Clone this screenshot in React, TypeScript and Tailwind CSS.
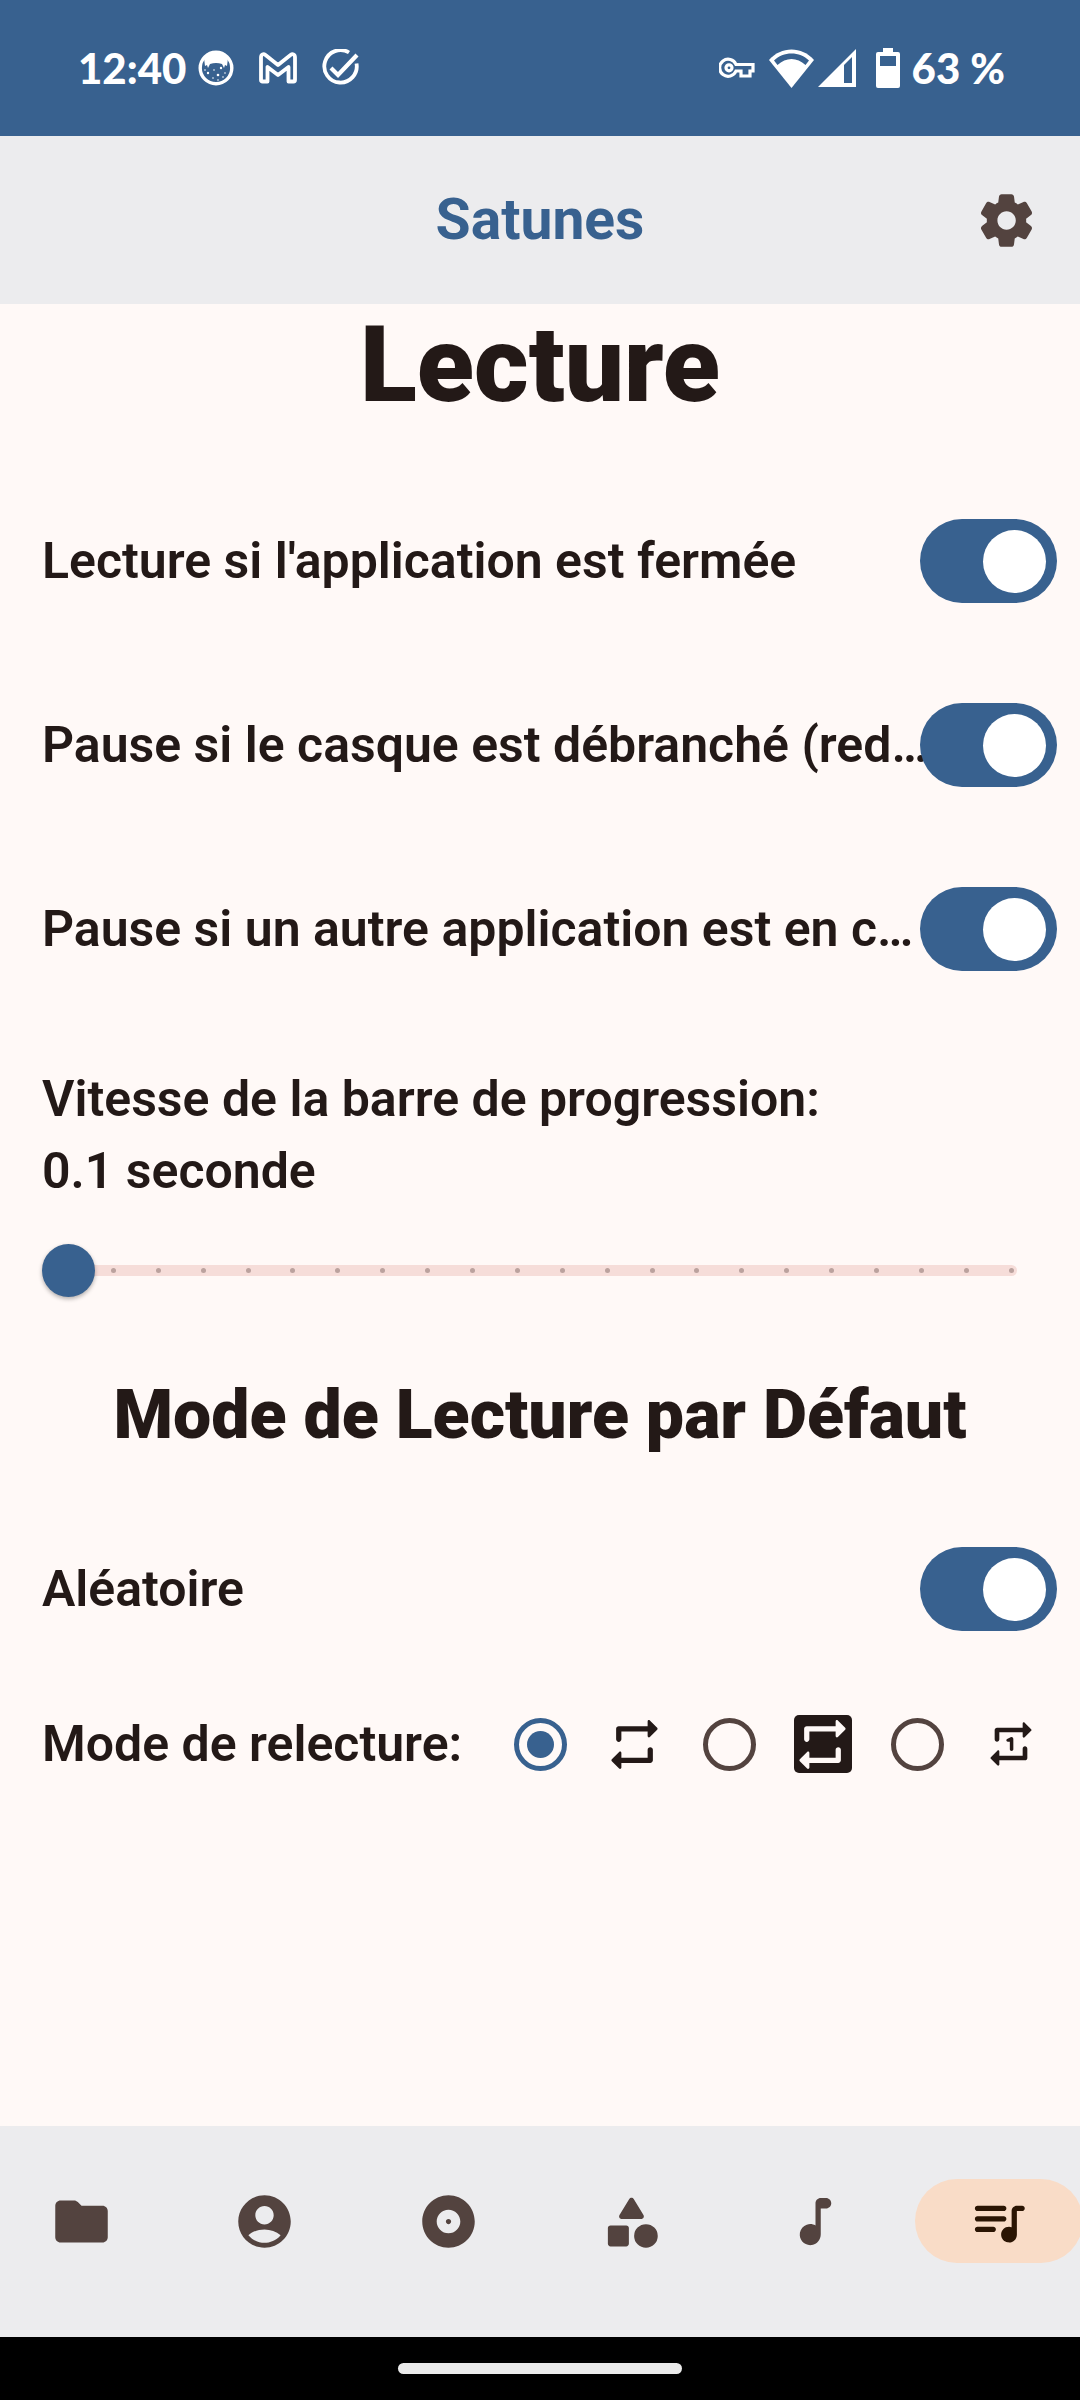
import { useState, type ReactNode } from "react";

const folder =
  "M10.59 4.59C10.21 4.21 9.7 4 9.17 4H4c-1.1 0-1.99.9-1.99 2L2 18c0 1.1.9 2 2 2h16c1.1 0 2-.9 2-2V8c0-1.1-.9-2-2-2h-8l-1.41-1.41z";
const account =
  "M12 2C6.48 2 2 6.48 2 12s4.48 10 10 10 10-4.48 10-10S17.52 2 12 2zm0 4.1c1.93 0 3.5 1.57 3.5 3.5s-1.57 3.5-3.5 3.5-3.5-1.57-3.5-3.5 1.57-3.5 3.5-3.5zm0 14c-2.03 0-4.43-.82-6.14-2.88C7.55 15.8 9.68 15 12 15s4.45.8 6.14 2.22C16.43 19.28 14.03 20.1 12 20.1z";
const album =
  "M12 2C6.48 2 2 6.48 2 12s4.48 10 10 10 10-4.48 10-10S17.52 2 12 2zm0 14.5c-2.49 0-4.5-2.01-4.5-4.5S9.51 7.5 12 7.5s4.5 2.01 4.5 4.5-2.01 4.5-4.5 4.5zm0-5.5c-.55 0-1 .45-1 1s.45 1 1 1 1-.45 1-1-.45-1-1-1z";
const category =
  "M11.15 3.4 7.43 9.48c-.41.66.07 1.52.85 1.52h7.43c.78 0 1.26-.86.85-1.52L12.85 3.4c-.39-.64-1.31-.64-1.7 0zM17.5 13a4.5 4.5 0 1 0 0 9 4.5 4.5 0 0 0 0-9zM4 21.5h6c.55 0 1-.45 1-1v-6c0-.55-.45-1-1-1H4c-.55 0-1 .45-1 1v6c0 .55.45 1 1 1z";
const note =
  "M12 5v8.55c-.94-.54-2.1-.75-3.33-.32-1.34.48-2.37 1.67-2.61 3.07-.46 2.74 1.86 5.08 4.59 4.65 1.96-.31 3.35-2.11 3.35-4.1V7h2c1.1 0 2-.9 2-2s-.9-2-2-2h-2c-1.1 0-2 .9-2 2z";
const queue =
  "M14 6H4c-.55 0-1 .45-1 1s.45 1 1 1h10c.55 0 1-.45 1-1s-.45-1-1-1zm0 4H4c-.55 0-1 .45-1 1s.45 1 1 1h10c.55 0 1-.45 1-1s-.45-1-1-1zM4 16h6c.55 0 1-.45 1-1s-.45-1-1-1H4c-.55 0-1 .45-1 1s.45 1 1 1zM19 6c-1.1 0-2 .9-2 2v6.18c-.31-.11-.65-.18-1-.18-1.84 0-3.28 1.64-2.95 3.54.21 1.21 1.2 2.2 2.41 2.41 1.9.33 3.54-1.11 3.54-2.95V8h2c.55 0 1-.45 1-1s-.45-1-1-1h-2z";
const gear =
  "M19.5 12c0-.23-.01-.45-.03-.68l1.86-1.41c.4-.3.51-.86.26-1.3l-1.87-3.23c-.25-.44-.79-.62-1.25-.42l-2.15.91c-.37-.26-.76-.49-1.17-.68l-.29-2.31C14.8 2.38 14.37 2 13.87 2h-3.73c-.51 0-.94.38-1 .88l-.29 2.31c-.41.19-.8.42-1.17.68l-2.15-.91c-.46-.2-1-.02-1.25.42L2.41 8.62c-.25.44-.14.99.26 1.3l1.86 1.41c-.02.22-.03.44-.03.67s.01.45.03.68l-1.86 1.41c-.4.3-.51.86-.26 1.3l1.87 3.23c.25.44.79.62 1.25.42l2.15-.91c.37.26.76.49 1.17.68l.29 2.31c.06.5.49.88.99.88h3.73c.5 0 .93-.38.99-.88l.29-2.31c.41-.19.8-.42 1.17-.68l2.15.91c.46.2 1 .02 1.25-.42l1.87-3.23c.25-.44.14-.99-.26-1.3l-1.86-1.41c.03-.23.04-.45.04-.68zm-7.46 3.5c-1.93 0-3.5-1.57-3.5-3.5s1.57-3.5 3.5-3.5 3.5 1.57 3.5 3.5-1.57 3.5-3.5 3.5z";
const repeatArrows =
  "M7 7h10v1.79c0 .45.54.67.85.35l2.79-2.79c.2-.2.2-.51 0-.71l-2.79-2.79c-.31-.31-.85-.09-.85.36V5H6c-.55 0-1 .45-1 1v4c0 .55.45 1 1 1s1-.45 1-1V7zm10 10H7v-1.79c0-.45-.54-.67-.85-.35l-2.79 2.79c-.2.2-.2.51 0 .71l2.79 2.79c.31.31.85.09.85-.36V19h11c.55 0 1-.45 1-1v-4c0-.55-.45-1-1-1s-1 .45-1 1v3z";
const oneMark =
  "M13 14.25V9.81c0-.45-.36-.81-.81-.81-.13 0-.25.03-.36.09l-1.49.74c-.21.1-.34.32-.34.55 0 .34.28.62.62.62h.88v3.25c0 .41.34.75.75.75s.75-.34.75-.75z";

function Icon({ d, className = "size-[63px]" }: { d: string; className?: string }) {
  return (
    <svg viewBox="0 0 24 24" className={className} fill="currentColor" aria-hidden="true">
      <path d={d} />
    </svg>
  );
}

function StatusBar() {
  return (
    <div className="flex h-[136px] items-center justify-between bg-[#38618f] pr-[75px] pl-[78px] text-white">
      <div className="flex items-center">
        <span className="w-[120px] font-[Lato] text-[42px] leading-[56px] font-black">12:40</span>
        <svg viewBox="0 0 36 36" className="size-9" aria-hidden="true">
          <circle cx="18" cy="18" r="15.8" fill="none" stroke="white" strokeWidth="3.4" />
          <path d="M6 8 11 3q7-3 14 0l5 5-1 8-2-1-1 3-2-4q-6-2-12 0l-2 4-1-3-2 1z" fill="white" />
          <g fill="white">
            <circle cx="10" cy="23" r="1.2" />
            <circle cx="16" cy="20" r=".8" />
            <circle cx="23" cy="18" r="1.2" />
            <circle cx="20" cy="25" r="1.3" />
            <circle cx="27" cy="23" r=".8" />
            <circle cx="7" cy="20" r=".8" />
            <circle cx="15" cy="28" r=".8" />
            <circle cx="25" cy="27" r=".8" />
            <circle cx="20" cy="30" r=".8" />
          </g>
        </svg>
        <svg viewBox="0 0 40 32" className="ml-6 h-8 w-10" fill="none" stroke="white" strokeWidth="3.8" strokeLinejoin="round" aria-hidden="true">
          <path d="M3 5.5C3 2 5.500 1.500 7.500 3L20 13 32.500 3C34.500 1.500 37 2 37 5.500V28q0 1.500-1.500 1.500H30.500V15L20 23 9.500 15V29.500H4.500q-1.500 0-1.500-1.500z" />
        </svg>
        <svg viewBox="0 0 38 38" className="ml-6 size-[38px]" fill="none" stroke="white" strokeWidth="3.8" aria-hidden="true">
          <path d="M27 3.5A16.200 16.200 0 1 0 34.500 14.500" />
          <path d="m9 19 7 7L35 6" strokeWidth="4.2" />
        </svg>
      </div>
      <div className="flex items-center">
        <svg viewBox="0 0 36 22" className="h-[22px] w-9" fill="none" stroke="white" strokeWidth="3.2" aria-hidden="true">
          <path d="M17 7.500A8.500 8.500 0 1 0 17 14h5v5h9v-5h3V7.500z" />
          <circle cx="10" cy="10.8" r="3" />
        </svg>
        <svg viewBox="0 0 45 39" className="ml-3.5 h-[39px] w-[45px]" aria-hidden="true">
          <path d="M22.500 39 0 11C12-3 33-3 45 11z" fill="white" />
          <path d="M5 11.500C14 2 31 2 40 11.500L36.500 16C28 8 17 8 8.500 16z" fill="#38618f" />
        </svg>
        <svg viewBox="0 0 38 38" className="ml-1 size-[38px]" aria-hidden="true">
          <path d="M0 38 38 0v38zM26 16v18h8V8z" fill="white" fillRule="evenodd" />
        </svg>
        <svg viewBox="0 0 24 40" className="ml-5 h-10 w-6" aria-hidden="true">
          <path d="M7 0h10v4h5q2 0 2 2v32q0 2-2 2H2q-2 0-2-2V6q0-2 2-2h5zM4 8v10h16V8z" fill="white" fillRule="evenodd" />
        </svg>
        <span className="ml-3 font-[Lato] text-[42px] leading-[56px] font-black">63 %</span>
      </div>
    </div>
  );
}

function SwitchRow({ label }: { label: string }) {
  const [on, setOn] = useState(true);
  return (
    <label className="flex h-[184px] items-center justify-between pr-[23px] pl-[42px]">
      <span className="w-0 flex-1 whitespace-nowrap">{label}</span>
      <input
        type="checkbox"
        role="switch"
        checked={on}
        onChange={() => setOn(!on)}
        className="relative h-[84px] w-[137px] shrink-0 appearance-none rounded-full bg-[#e0d0cc] p-[11px] before:block before:size-[63px] before:rounded-full before:bg-white checked:bg-[#38618f] checked:before:ml-auto"
      />
    </label>
  );
}

function SpeedSlider() {
  const [value, setValue] = useState(0);
  return (
    <div className="relative mx-[42px] mt-[37px] h-[53px]">
      <div className="absolute inset-x-[21px] top-[21px] flex h-[11px] items-center justify-between rounded-full bg-[#f6ddd9] px-[3px]">
        {Array.from({ length: 22 }, (_, i) => (
          <span key={i} className="size-[5px] rounded-full bg-[#bba29e]" />
        ))}
      </div>
      <input
        id="speed"
        type="range"
        min={0}
        max={21}
        value={value}
        onChange={(e) => setValue(Number(e.target.value))}
        className="absolute inset-0 h-[53px] w-full appearance-none bg-transparent [&::-webkit-slider-thumb]:size-[53px] [&::-webkit-slider-thumb]:appearance-none [&::-webkit-slider-thumb]:rounded-full [&::-webkit-slider-thumb]:bg-[#38618f] [&::-webkit-slider-thumb]:shadow-[0_2px_4px_rgba(0,0,0,0.3)]"
      />
    </div>
  );
}

function RepeatChoice({ name, checked, onSelect, children }: { name: string; checked: boolean; onSelect: () => void; children: ReactNode }) {
  return (
    <label className="flex flex-1 items-center gap-6">
      <input
        type="radio"
        name="repeat"
        aria-label={name}
        checked={checked}
        onChange={onSelect}
        className="grid size-[53px] shrink-0 appearance-none place-items-center rounded-full border-[5px] border-[#53433f] checked:border-[#38618f] checked:before:size-[27px] checked:before:rounded-full checked:before:bg-[#38618f]"
      />
      <span className="flex w-[86px] justify-center">{children}</span>
    </label>
  );
}

const tabs = [
  { name: "Dossiers", d: folder },
  { name: "Artistes", d: account },
  { name: "Albums", d: album },
  { name: "Genres", d: category },
  { name: "Musiques", d: note },
  { name: "Playlists", d: queue },
];

export default function App() {
  const [repeat, setRepeat] = useState(0);
  const [tab, setTab] = useState(5);
  return (
    <div className="flex min-h-screen flex-col bg-[#fff9f7] font-[Roboto,sans-serif] text-[#231917]">
      <StatusBar />
      <header className="grid h-[168px] grid-cols-[1fr_auto_1fr] items-center bg-[#ececee]">
        <span />
        <span className="text-[57px] leading-[70px] font-bold text-[#38618f]">Satunes</span>
        <button aria-label="Paramètres" className="mr-[42px] justify-self-end text-[#53433f]">
          <Icon d={gear} />
        </button>
      </header>

      <main className="flex-1 text-[50px] leading-[72px] font-semibold">
        <h1 className="pt-[2px] text-center text-[105px] leading-[120px] font-black">Lecture</h1>
        <div className="mt-[43px]">
          <SwitchRow label="Lecture si l'application est fermée" />
          <SwitchRow label="Pause si le casque est débranché (red…" />
          <SwitchRow label="Pause si un autre application est en c…" />
        </div>
        <div className="mt-[42px]">
          <label htmlFor="speed" className="block px-[42px]">
            Vitesse de la barre de progression:
            <br />
            0.1 seconde
          </label>
          <SpeedSlider />
        </div>
        <h2 className="mt-[78px] text-center text-[68px] leading-[80px] font-black">Mode de Lecture par Défaut</h2>
        <div className="mt-[42px]">
          <SwitchRow label="Aléatoire" />
        </div>
        <fieldset className="mt-[27px] flex h-[72px] items-center pl-[42px]">
          <legend className="float-left w-[472px]">Mode de relecture:</legend>
          <RepeatChoice name="Aucune répétition" checked={repeat === 0} onSelect={() => setRepeat(0)}>
            <Icon d={repeatArrows} />
          </RepeatChoice>
          <RepeatChoice name="Tout répéter" checked={repeat === 1} onSelect={() => setRepeat(1)}>
            <span className="grid size-[58px] place-content-center rounded-[5px] bg-[#231917] text-[#fff9f7]">
              <Icon d={repeatArrows} className="size-[63px] shrink-0" />
            </span>
          </RepeatChoice>
          <RepeatChoice name="Répéter un titre" checked={repeat === 2} onSelect={() => setRepeat(2)}>
            <Icon d={repeatArrows + oneMark} className="size-14" />
          </RepeatChoice>
        </fieldset>
      </main>

      <nav className="grid h-[211px] grid-cols-6 gap-[21px] overflow-hidden bg-[#ececee] pt-[53px]">
        {tabs.map((t, i) => (
          <button
            key={t.name}
            aria-label={t.name}
            onClick={() => setTab(i)}
            className={
              i === tab
                ? "flex h-[84px] w-[168px] items-center justify-center justify-self-center rounded-full bg-[#f9dcc7] text-[#2b1503]"
                : "flex h-[84px] w-[168px] items-center justify-center justify-self-center rounded-full text-[#53433f]"
            }
          >
            <Icon d={t.d} />
          </button>
        ))}
      </nav>
      <div className="flex h-[63px] items-center justify-center bg-black">
        <div className="h-[11px] w-[284px] rounded-full bg-[#ebebeb]" />
      </div>
    </div>
  );
}
